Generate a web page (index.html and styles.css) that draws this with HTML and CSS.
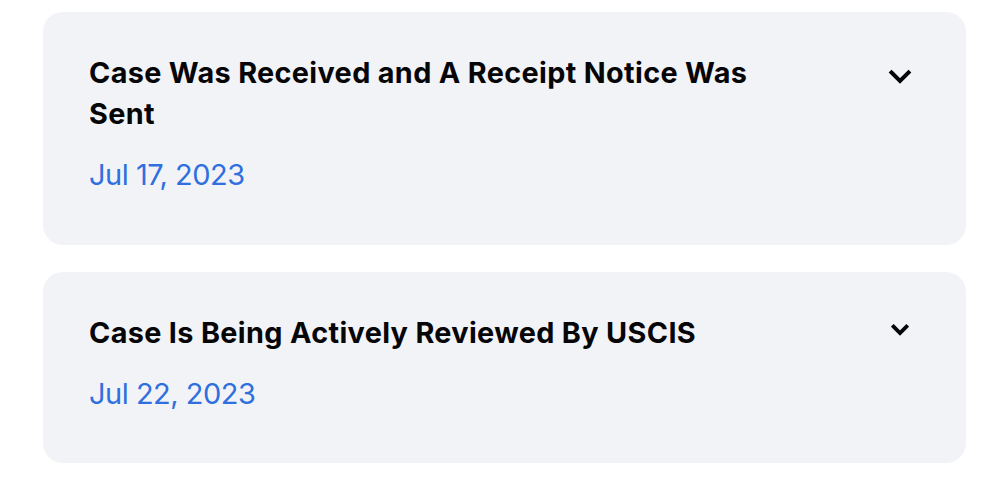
FILE: index.html
```html
<!DOCTYPE html>
<html lang="en">
<head>
    <meta charset="UTF-8">
    <meta name="viewport" content="width=device-width, initial-scale=1.0">
    <title>Case Status</title>
    <link rel="stylesheet" href="styles.css">
</head>
<body>
    <main class="timeline">
        <section class="case-card">
            <div class="case-info">
                <h2>Case Was Received and A Receipt Notice Was Sent</h2>
                <p class="case-date">Jul 17, 2023</p>
            </div>
            <svg class="chevron chevron-lg" viewBox="0 0 24 16" aria-hidden="true">
                <path d="M3.5 3.5 L12 12 L20.5 3.5"/>
            </svg>
        </section>

        <section class="case-card">
            <div class="case-info">
                <h2>Case Is Being Actively Reviewed By USCIS</h2>
                <p class="case-date">Jul 22, 2023</p>
            </div>
            <svg class="chevron chevron-sm" viewBox="0 0 24 16" aria-hidden="true">
                <path d="M3.5 3.5 L12 12 L20.5 3.5"/>
            </svg>
        </section>
    </main>
</body>
</html>
```

FILE: styles.css
```css
body {
    margin: 0;
    background: #fff;
    font-family: Inter, "Noto Sans", sans-serif;
    color: #060608;
}

.timeline {
    padding: 12px 34px 0 43px;
    display: flex;
    flex-direction: column;
    gap: 27px;
}

.case-card {
    background: #f2f3f7;
    border-radius: 20px;
    padding: 40px 54px 49.5px 46px;
    display: flex;
    justify-content: space-between;
    align-items: flex-start;
}

.case-info {
    max-width: 700px;
}

.case-info h2 {
    margin: 0;
    font-size: 28.8px;
    font-weight: 700;
    line-height: 41px;
    letter-spacing: 0.35px;
}

.case-date {
    margin: 21px 0 0;
    font-size: 29px;
    line-height: 40px;
    color: #2f6fde;
    letter-spacing: -0.5px;
}

.chevron {
    flex: none;
    fill: none;
    stroke: #060608;
    stroke-linecap: square;
}

.chevron-lg {
    width: 24px;
    height: 16px;
    margin-top: 17px;
    stroke-width: 4;
}

.chevron-sm {
    width: 18px;
    height: 12px;
    margin-top: 12px;
    margin-right: 3px;
    stroke-width: 5;
}
```
